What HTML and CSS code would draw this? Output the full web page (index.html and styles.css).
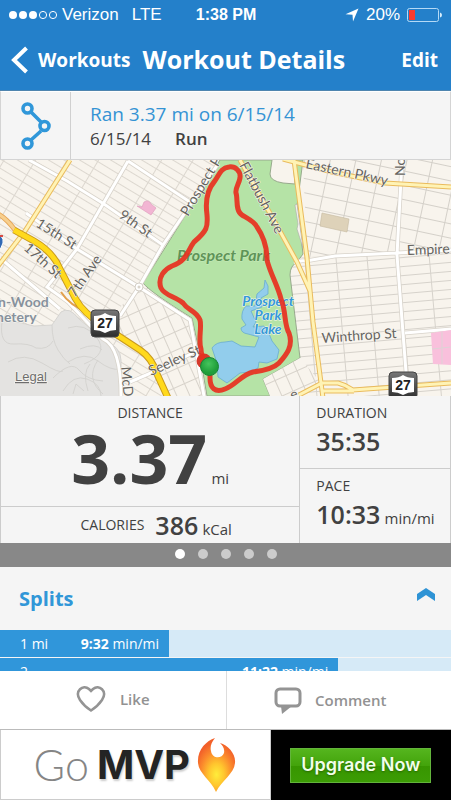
FILE: index.html
```html
<!DOCTYPE html>
<html lang="en">
<head>
<meta charset="utf-8">
<meta name="viewport" content="width=device-width, initial-scale=1">
<title>Workout Details</title>
<link rel="stylesheet" href="styles.css">
</head>
<body>
<div class="app">
  <header class="top">
    <div class="status">
      <div class="carrier">
        <svg class="signal" viewBox="0 0 48 10" aria-hidden="true">
          <g fill="#fff"><circle cx="4" cy="5" r="4"/><circle cx="14" cy="5" r="4"/><circle cx="24" cy="5" r="4"/></g>
          <g fill="none" stroke="#fff"><circle cx="34" cy="5" r="3.6"/><circle cx="44" cy="5" r="3.6"/></g>
        </svg>
        <span>Verizon</span>
        <span class="network">LTE</span>
      </div>
      <strong class="clock">1:38 PM</strong>
      <div class="power">
        <svg class="locate" viewBox="0 0 14 14" aria-hidden="true"><path fill="#fff" d="M13.500 0.500L8 13.500L7.500 6.800L0.500 6.300Z"/></svg>
        <span>20%</span>
        <svg class="battery" viewBox="0 0 36 14" aria-hidden="true">
          <rect x=".5" y=".5" width="31" height="13" rx="2" fill="none" stroke="#b5daf6"/>
          <rect x="2" y="2" width="6" height="10" fill="#fb3a2f"/>
          <path d="M33 4.500q2 .5 2 2.500t-2 2.500z" fill="#d8edfb"/>
        </svg>
      </div>
    </div>
    <nav class="nav">
      <a class="back" href="#workouts">
        <svg viewBox="0 0 18 28" aria-hidden="true"><path d="M15.500 2L3 14L15.500 26" fill="none" stroke="#fff" stroke-width="4"/></svg>
        <span>Workouts</span>
      </a>
      <h1>Workout Details</h1>
      <button class="edit" type="button">Edit</button>
    </nav>
  </header>

  <main class="content">
    <section class="summary">
      <div class="source">
        <svg viewBox="0 0 30 48" aria-hidden="true">
          <g fill="none" stroke="#3097d9" stroke-width="3.600"><path d="M10 10L20 20M20 29L10 38"/><circle cx="6.500" cy="6.500" r="4.500"/><circle cx="23.500" cy="24" r="4.500"/><circle cx="6.500" cy="41.500" r="4.500"/></g>
        </svg>
      </div>
      <div class="about">
        <h2>Ran 3.37 mi on 6/15/14</h2>
        <p><span>6/15/14</span><b>Run</b></p>
      </div>
    </section>

    <svg class="map" viewBox="0 160 451 236" role="img" aria-label="Route around Prospect Park">
      <defs>
        <pattern id="slope" width="27" height="8" patternUnits="userSpaceOnUse" patternTransform="translate(4 2) rotate(31)"><path d="M0 .5H27M.5 0V8" stroke="#dcd7cf" fill="none"/></pattern>
        <pattern id="east" width="31" height="9" patternUnits="userSpaceOnUse" patternTransform="translate(2 3) rotate(-5)"><path d="M0 .5H31M.5 0V9" stroke="#d6d2cb" fill="none"/></pattern>
        <pattern id="crown" width="25" height="14" patternUnits="userSpaceOnUse" patternTransform="translate(6 0) rotate(12)"><path d="M0 .5H25M.5 0V14" stroke="#d4d0c9" fill="none"/></pattern>
        <pattern id="lots" width="12" height="17" patternUnits="userSpaceOnUse" patternTransform="rotate(-24)"><path d="M0 .5H12M.5 0V17" stroke="#d7d2ca" fill="none"/></pattern>
        <linearGradient id="shield" x2="0" y2="1"><stop stop-color="#777"/><stop offset="1" stop-color="#2d2d2d"/></linearGradient>
        <radialGradient id="pin" cx=".45" cy=".35"><stop stop-color="#45c45c"/><stop offset="1" stop-color="#1f9e3a"/></radialGradient>
      </defs>
      <rect y="160" width="451" height="236" fill="#f8f4ed"/>
      <path d="M0 160H220L143 283L192 318L205 396H0Z" fill="url(#slope)"/>
      <path d="M143 283L192 318L206 396H168Q155 355 105 328L122 305Z" fill="#f8f4ed"/>
      <path d="M143 283L192 318L206 396H168Q155 355 105 328L122 305Z" fill="url(#lots)"/>
      <path d="M290 258L451 250V396H260Z" fill="url(#east)"/>
      <path d="M303 160H451V250L307 258Z" fill="url(#crown)"/>

      <path d="M220 160L143 283Q150 292 192 318L200 355L207 396H270L263 379L300 358L290 275Q290 266 297 262L303 254L300 228L297 206L303 160H293L295 184L283 183Q270 181 270 174L272 160Z" fill="#b5e3a6" stroke="#98aa8d"/>
      <path d="M263 379L300 358L322 384L300 396H270Z" fill="#f8f4ed"/>
      <path d="M263 379L300 358L322 384L300 396H270Z" fill="url(#lots)"/>
      <path d="M297 204L303 248L297 229L298 224L295 205Z" fill="#f8f4ed" stroke="#aaa" stroke-width=".6"/>
      <path d="M212 348Q216 342 225 342L232 341L241 346L255 347L259 337L248 334Q241 333 241 328L246 325L242 319Q241 311 246 306H255L257 294L264 288L265 280L268 286V294L261 298L262 307L251 311L256 322L253 327L264 326L268 331L272 341L279 350L277 359L267 363L259 362L258 368L250 372L240 373L227 383L218 377L217 363Z" fill="#92cdec" stroke="#68acd1" stroke-width=".8"/>

      <path d="M0 318L14 322L34 326L52 325L61 312Q69 306 79 319L103 339Q121 347 121 360V396H0Z" fill="#e4e3e1"/>
      <g fill="none" stroke="#d2d1ce" stroke-width=".9">
        <path d="M0 318L34 326L52 325L61 312Q69 306 79 319L103 339Q121 347 121 360V396M2 322Q-1 345 14 344T36 348Q48 350 53 341M52 325Q52 340 58 350T70 364M68 328Q85 322 97 338T84 364M80 349Q96 342 102 350M68 362Q85 351 98 361T120 369M53 378Q71 360 79 370T103 381M63 391Q73 374 87 379T101 396M8 362Q24 352 42 363T63 371"/>
        <path d="M90 364Q82 373 88 391M98 360Q85 379 103 394M73 394L76 384L84 391"/>
      </g>

      <g fill="none" stroke="#d8d3ca" stroke-width="4.500">
        <path d="M29 160L67 181L104 204L163 245M128 161L190 202M26 213L77 249L139 287L190 320L204 396M128 161L103 204L77 249L47 287L68 302L103 339Q121 347 121 396M218 164L180 220L163 245L139 287L120 316M0 258L60 309M130 382L158 370L201 349"/>
        <path d="M295 264Q298 260 306 261L335 256L397 253L451 250M402 160L397 255L407 385M405 333L451 329"/>
      </g>
      <g fill="none" stroke="#fff" stroke-width="3">
        <path d="M29 160L67 181L104 204L163 245M128 161L190 202M26 213L77 249L139 287L190 320L204 396M128 161L103 204L77 249L47 287L68 302L103 339Q121 347 121 396M218 164L180 220L163 245L139 287L120 316M0 258L60 309M130 382L158 370L201 349"/>
        <path d="M295 264Q298 260 306 261L335 256L397 253L451 250M402 160L397 255L407 385M405 333L451 329"/>
      </g>
      <circle cx="139" cy="287" r="4" fill="#fff" stroke="#d3cec5"/>
      <circle cx="139" cy="287" r="1.500" fill="#d9d4cb"/>

      <g fill="none" stroke="#eabb5c" stroke-width="5">
        <path d="M70 160L25 231L-2 266M240 160L276 224L297 262L310 291M294 160L307 258L313 322L323 398M283 159L332 172L385 183L451 187M299 395L322 383H338Q346 385 353 390L451 383M322 391H354"/>
      </g>
      <g fill="none" stroke="#fff3b5" stroke-width="3">
        <path d="M70 160L25 231L-2 266M240 160L276 224L297 262L310 291M294 160L307 258L313 322L323 398M283 159L332 172L385 183L451 187M299 395L322 383H338Q346 385 353 390L451 383M322 391H354"/>
      </g>
      <path d="M-2 214Q6 218 15 230" fill="none" stroke="#e5a456" stroke-width="5"/>
      <path d="M-2 214Q6 218 15 230" fill="none" stroke="#f7cf8e" stroke-width="3"/>
      <path d="M61 292Q70 306 88 312" fill="none" stroke="#e2a04e" stroke-width="2"/>
      <path d="M14 230L34 241Q53 252 60 269L75 298Q83 313 105 327L140 350Q152 358 157 374L168 398" fill="none" stroke="#c99a1e" stroke-width="7"/>
      <path d="M14 230L34 241Q53 252 60 269L75 298Q83 313 105 327L140 350Q152 358 157 374L168 398" fill="none" stroke="#ffd91c" stroke-width="5"/>
      <path d="M137 206L142 207L144 202Q149 199 151 204L156 208L151 215Z" fill="#f2b5d3" stroke="#dc9bbb" stroke-width=".6"/>
      <path d="M322 213L349 219L347 232L320 226Z" fill="#ded2b9" stroke="#c5b99f" stroke-width=".6"/>
      <path d="M431 333L451 330V365L433 364Z" fill="#f9c0dc"/>
      <path d="M442 332V364M432 349L451 347" stroke="#ddd3d5"/>
      <path d="M-4 235Q4 235 3 243Q2 248-3 252Z" fill="#3269b4" stroke="#fff"/><path d="M-2 236H3" stroke="#d94b45" stroke-width="2"/>

      <g class="road-label">
        <text transform="translate(35 226) rotate(32)">15th St</text>
        <text transform="translate(23 249) rotate(42)">17th St</text>
        <text transform="translate(118 217) rotate(35)">9th St</text>
        <text transform="translate(75 298) rotate(-55)">7th Ave</text>
        <text transform="translate(188 217) rotate(-59)">Prospect P</text>
        <text transform="translate(239 165) rotate(62)">Flatbush Ave</text>
        <text transform="translate(305 168) rotate(12)">Eastern Pkwy</text>
        <text transform="translate(405 176) rotate(-90)">No</text>
        <text transform="translate(407 255) rotate(-2)">Empire</text>
        <text transform="translate(322 343) rotate(-4)">Winthrop St</text>
        <text transform="translate(151 376) rotate(-24)">Seeley St</text>
        <text transform="translate(121 367) rotate(85)">McD</text>
        <text transform="translate(292 400) rotate(-20)">e</text>
      </g>
      <g class="cemetery-label"><text x="-2" y="307">n-Wood</text><text x="-4" y="322">netery</text></g>
      <text class="park-label" x="177" y="261">Prospect Park</text>
      <g class="lake-label"><text x="268" y="306">Prospect</text><text x="268" y="320">Park</text><text x="268" y="334">Lake</text></g>
      <a href="#legal"><text class="legal" x="15" y="381">Legal</text></a>

      <g id="route27">
        <rect x="91" y="310" width="28" height="27" rx="4" fill="url(#shield)" stroke="#444"/>
        <path d="M94 316Q101 316 105 313Q109 316 116 316V330Q110 330 105 333Q100 330 94 330Z" fill="#fff"/>
        <text class="shield-number" x="105" y="328">27</text>
      </g>
      <use href="#route27" x="298" y="62"/>

      <circle cx="204" cy="361" r="7.500" fill="#d53a2c"/>
      <path d="M229 167C235 166 241 171 240 178C239 184 235 188 236 193C238 198 235 211 242 215C247 218 254 221 257 227C264 237 267 248 267 260C270 273 278 286 281 299C286 310 284 325 289 333C294 347 285 356 279 363C273 369 261 371 253 372C241 375 236 385 225 389C215 393 210 388 210 378C211 368 201 362 201 349C198 340 202 327 200 320C196 310 188 311 183 303C175 296 165 296 161 288C157 277 165 269 172 266C188 260 187 251 194 242C207 231 208 227 207 215C205 200 208 189 214 182C219 176 220 168 229 167Z" fill="none" stroke="#e8301f" stroke-opacity=".92" stroke-width="5" stroke-linejoin="round"/>
      <circle cx="209.500" cy="366.500" r="9" fill="url(#pin)" stroke="#188635"/>
    </svg>

    <section class="stats" aria-label="Workout statistics">
      <div class="major">
        <div class="distance"><h3>DISTANCE</h3><p><strong>3.37</strong> <span>mi</span></p></div>
        <div class="calories"><h3>CALORIES</h3><p><strong>386</strong> <span>kCal</span></p></div>
      </div>
      <div class="minor">
        <div class="measure"><h3>DURATION</h3><p><strong>35:35</strong></p></div>
        <div class="measure"><h3>PACE</h3><p><strong>10:33</strong> <span>min/mi</span></p></div>
      </div>
    </section>
    <div class="pager" aria-hidden="true"><i class="on"></i><i></i><i></i><i></i><i></i></div>

    <section class="splits">
      <div class="splits-head">
        <h2>Splits</h2>
        <button type="button" aria-label="Collapse splits"><svg viewBox="0 0 18 13" aria-hidden="true"><path fill="#2e93d5" d="M9 0L18 6V13L9 7L0 13V6Z"/></svg></button>
      </div>
      <div class="split"><div class="bar" style="width:37.5%"><span>1 mi</span><span><b>9:32</b> min/mi</span></div></div>
      <div class="split"><div class="bar" style="width:75%"><span>2</span><span><b>11:22</b> min/mi</span></div></div>
    </section>
  </main>

  <footer>
    <div class="actions">
      <button class="like" type="button"><svg viewBox="0 0 30 28" aria-hidden="true"><path d="M15 25.500Q8 21 4 15C-2 6 7-1 13 4L15 6L17 4C23-1 32 6 26 15Q22 21 15 25.500Z" fill="none" stroke="#949494" stroke-width="2.500"/></svg><span>Like</span></button>
      <button class="comment" type="button"><svg viewBox="0 0 30 28" aria-hidden="true"><rect x="3" y="3" width="24" height="17" rx="4" fill="none" stroke="#949494" stroke-width="3"/><path d="M8 20H19L9 28Z" fill="#949494"/></svg><span>Comment</span></button>
    </div>
    <div class="promo">
      <div class="brand">
        <span class="go">Go</span><span class="mvp">MVP</span>
        <svg viewBox="0 0 40 56" aria-hidden="true">
          <defs>
            <radialGradient id="flame" cx=".5" cy=".68" r=".6"><stop stop-color="#ffed3b"/><stop offset=".35" stop-color="#ffc52e"/><stop offset=".7" stop-color="#fb8a2c"/><stop offset="1" stop-color="#f2602a"/></radialGradient>
          </defs>
          <path fill="url(#flame)" d="M18 1C14 6 13 10 14 14C15 22 25 22 27 16C28 11 25 8 23 6C31 8 39 17 38 26C37 37 25 43 19 55C14 43 2 37 1 26C0 13 9 4 18 1Z"/>
        </svg>
      </div>
      <div class="offer"><button type="button">Upgrade Now</button></div>
    </div>
  </footer>
</div>
</body>
</html>
```
FILE: styles.css
```css
* { box-sizing: border-box; }
body { margin: 0; font-family: "Open Sans", "Noto Sans", sans-serif; color: #414141; background: #f5f5f5; }
h1, h2, h3, p { margin: 0; font-weight: 400; }
button { border: 0; padding: 0; background: none; color: inherit; font: inherit; }
a { color: inherit; text-decoration: none; }
svg { display: block; flex: none; }
.app { display: flex; flex-direction: column; height: 100vh; }

.top { flex: none; background: #2480ca; color: #fff; border-bottom: 1px solid #4f85af; }
.status { display: grid; grid-template-columns: 1fr auto 1fr; align-items: center; height: 30px; padding: 0 8px 0 9px; font: 17px/20px "Liberation Sans", sans-serif; }
.carrier, .power { display: flex; align-items: center; }
.carrier { gap: 5px; }
.signal { width: 48px; height: 10px; }
.network { margin-left: 8px; font-weight: 300; }
.clock { font-size: 16px; }
.power { justify-content: flex-end; gap: 7px; }
.locate { width: 14px; height: 14px; }
.battery { width: 36px; height: 14px; }
.nav { display: flex; align-items: center; height: 60px; padding: 0 13px 0 11px; }
.back { display: flex; align-items: center; gap: 9px; font-size: 19px; font-weight: 700; }
.back svg { width: 18px; height: 28px; }
.nav h1 { margin-left: 12px; font-size: 25px; line-height: 34px; font-weight: 700; padding-bottom: 2px; }
.edit { margin-left: auto; font-size: 19px; font-weight: 700; }

.content { flex: 1; min-height: 0; overflow: hidden; }
.summary { display: flex; height: 69px; border: 1px solid #d4d4d4; border-top-color: #fff; }
.source { width: 70px; display: flex; align-items: center; justify-content: center; border-right: 1px solid #d0d0d0; }
.source svg { width: 30px; height: 48px; }
.about { padding: 10px 19px; }
.about h2 { color: #3493d4; font-size: 19px; line-height: 25px; }
.about p { display: flex; gap: 24px; font-size: 17px; line-height: 24px; }
.about b { font-weight: 600; }

.map { width: 100%; height: auto; overflow: hidden; }
.map text { font-family: Lato, sans-serif; paint-order: stroke; stroke: #faf8f3; stroke-width: 1px; }
.road-label { font-size: 14px; fill: #66645f; }
.cemetery-label { font-size: 14px; font-weight: 700; fill: #87919c; }
.map .park-label { font-size: 16px; font-weight: 700; font-style: italic; fill: #5f9458; stroke: #c9eabc; }
.lake-label { font-size: 14px; font-weight: 700; font-style: italic; fill: #3499d8; text-anchor: middle; }
.map .legal { font: 400 13px "Liberation Sans", sans-serif; fill: #6d6d6d; text-decoration: underline; }
.map .shield-number { font: 700 14px "Liberation Sans", sans-serif; fill: #222; text-anchor: middle; stroke: none; }

.stats { display: grid; grid-template-columns: 2fr 1fr; height: 147px; border: 1px solid #ccc; border-width: 0 1px; }
.stats h3 { font-size: 14px; line-height: 20px; }
.stats strong { font-size: 25px; line-height: 32px; font-weight: 600; }
.stats p span { font-size: 15px; }
.major { display: grid; grid-template-rows: 1fr 37px; border-right: 1px solid #ccc; }
.distance { padding-top: 7px; text-align: center; }
.distance strong { font-size: 68px; line-height: 70px; font-weight: 700; }
.calories { display: flex; align-items: center; justify-content: center; gap: 11px; padding-left: 12px; border-top: 1px solid #ccc; }
.minor { display: grid; grid-template-rows: 72px 1fr; }
.measure { padding: 7px 0 0 16px; white-space: nowrap; }
.measure + .measure { border-top: 1px solid #ccc; }
.measure p { margin-top: 2px; }
.pager { height: 24px; display: flex; align-items: center; justify-content: center; gap: 13px; padding-bottom: 2px; background: #888; }
.pager i { width: 10px; height: 10px; border-radius: 50%; background: #ccc; }
.pager .on { background: #fff; }

.splits-head { display: flex; align-items: center; justify-content: space-between; height: 63px; padding: 0 16px 0 19px; }
.splits-head h2 { color: #3197d8; font-size: 20px; font-weight: 700; }
.splits-head svg { width: 18px; height: 13px; margin-bottom: 8px; }
.split { margin-bottom: 1px; background: #d6eaf7; }
.bar { display: flex; align-items: center; justify-content: space-between; height: 27px; padding: 0 10px 0 20px; background: #3096da; color: #fff; font-size: 14px; }

footer { flex: none; }
.actions { display: grid; grid-template-columns: 1fr 1fr; height: 58px; background: #fff; color: #929292; font-size: 15px; font-weight: 600; }
.actions button { display: flex; align-items: center; justify-content: center; gap: 14px; }
.actions svg { width: 30px; height: 28px; }
.like { padding-bottom: 2px; }
.actions .comment { padding-right: 18px; gap: 12px; border-left: 1px solid #ddd; }
.promo { display: grid; grid-template-columns: 3fr 2fr; height: 71px; border-top: 1px solid #bbb; background: #fff; }
.brand { display: flex; align-items: center; justify-content: center; border: 1px solid #ccc; border-top: 0; }
.go { color: #858585; font: 300 43px/50px Lato, sans-serif; }
.mvp { margin-left: 8px; color: #242424; font: 700 40px/50px Inter, sans-serif; text-shadow: 1px 2px 2px #ccc; }
.brand svg { width: 40px; height: 56px; margin-left: 7px; }
.offer { display: flex; align-items: center; justify-content: center; background: #000; }
.offer button { width: 141px; height: 35px; border: 1px solid #63b43c; background: linear-gradient(#55b51e, #43a40b 50%, #379600 51%, #3c9c05); color: #f1ffe9; font: 600 18px/24px Inter, sans-serif; text-shadow: 0 1px 2px #276700; }
```
